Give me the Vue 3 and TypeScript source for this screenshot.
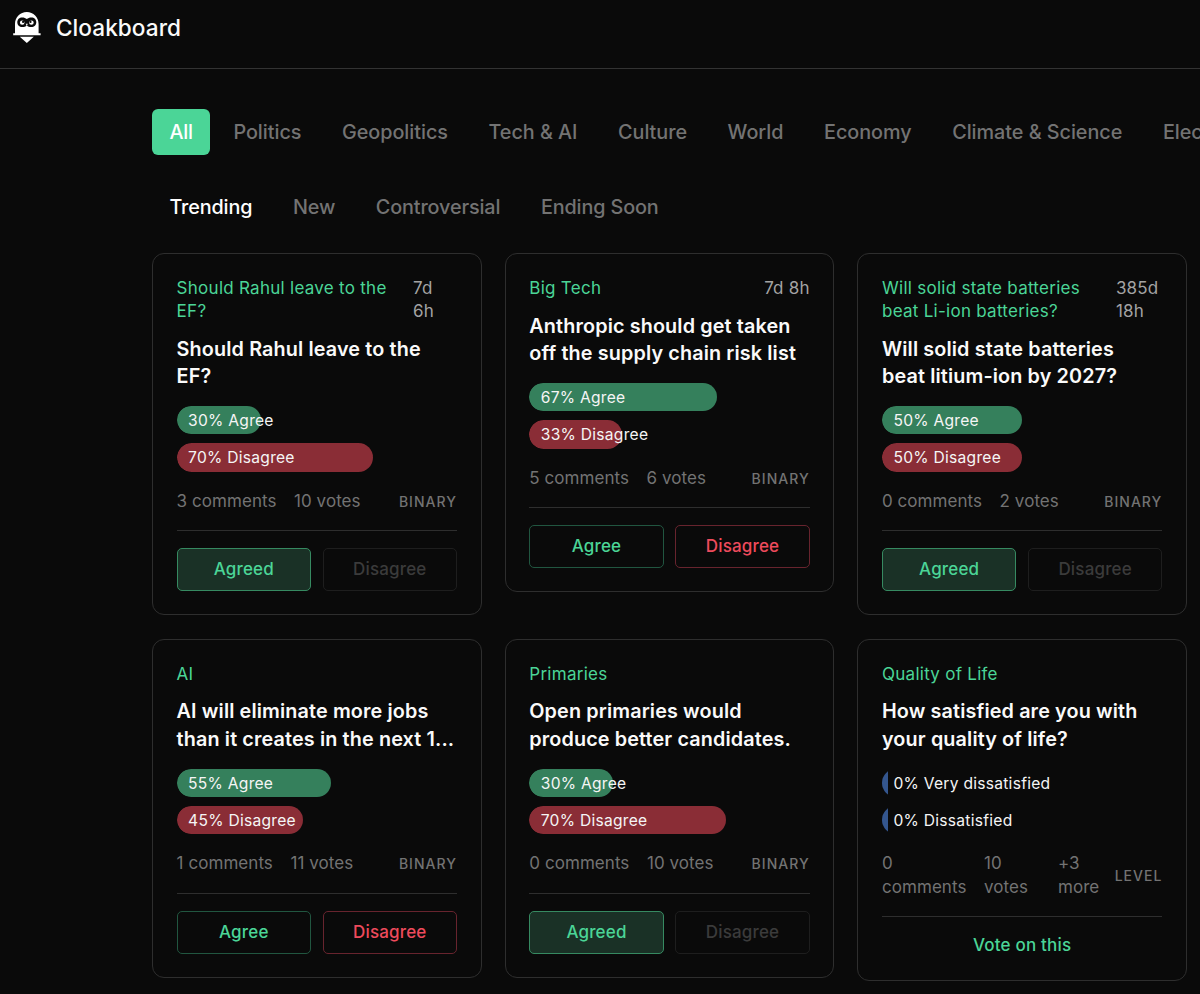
<script setup lang="ts">
interface Bar {
  pct: number
  label: string
  tone: 'agree' | 'disagree' | 'level'
}
interface Card {
  topic: string
  time?: string
  timeWidth?: number
  title: string
  bars: Bar[]
  comments: string
  votes: string
  more?: string
  kind: 'BINARY' | 'LEVEL'
  state: 'open' | 'agreed' | 'link'
}

const categories = ['All', 'Politics', 'Geopolitics', 'Tech & AI', 'Culture', 'World', 'Economy', 'Climate & Science', 'Elections']
const sorts = ['Trending', 'New', 'Controversial', 'Ending Soon']

const split = (agree: number): Bar[] => [
  { pct: agree, label: 'Agree', tone: 'agree' },
  { pct: 100 - agree, label: 'Disagree', tone: 'disagree' },
]

const cards: Card[] = [
  { topic: 'Should Rahul leave to the\nEF?', time: '7d\n6h', timeWidth: 44, title: 'Should Rahul leave to the\nEF?', bars: split(30), comments: '3 comments', votes: '10 votes', kind: 'BINARY', state: 'agreed' },
  { topic: 'Big Tech', time: '7d 8h', title: 'Anthropic should get taken\noff the supply chain risk list', bars: split(67), comments: '5 comments', votes: '6 votes', kind: 'BINARY', state: 'open' },
  { topic: 'Will solid state batteries\nbeat Li-ion batteries?', time: '385d\n18h', timeWidth: 46.5, title: 'Will solid state batteries\nbeat litium-ion by 2027?', bars: split(50), comments: '0 comments', votes: '2 votes', kind: 'BINARY', state: 'agreed' },
  { topic: 'AI', title: 'AI will eliminate more jobs\nthan it creates in the next 1...', bars: split(55), comments: '1 comments', votes: '11 votes', kind: 'BINARY', state: 'open' },
  { topic: 'Primaries', title: 'Open primaries would\nproduce better candidates.', bars: split(30), comments: '0 comments', votes: '10 votes', kind: 'BINARY', state: 'agreed' },
  {
    topic: 'Quality of Life',
    title: 'How satisfied are you with\nyour quality of life?',
    bars: [
      { pct: 0, label: 'Very dissatisfied', tone: 'level' },
      { pct: 0, label: 'Dissatisfied', tone: 'level' },
    ],
    comments: '0\ncomments',
    votes: '10\nvotes',
    more: '+3\nmore',
    kind: 'LEVEL',
    state: 'link',
  },
]
</script>

<template>
  <div class="page">
    <header class="header">
      <svg class="logo" viewBox="0 0 28 32" aria-hidden="true">
        <path d="M2 21.2V12C2 5 7.2 0 13.8 0S25.6 5 25.6 12V21.2H27.6V23.2H0.2V21.2Z" fill="#fff" />
        <path d="M6.8 24.8H20.8L13.8 31Z" fill="#fff" />
        <path d="M9.2 5.4C11.2 5.4 12.6 6 13.8 7C15 6 16.4 5.4 18.4 5.4C21.2 5.4 23.3 7.4 23.3 10.3S21.2 15.1 18.4 15.1C16.4 15.1 15 14.4 13.8 13.4C12.6 14.4 11.2 15.1 9.2 15.1C6.4 15.1 4.3 13.2 4.3 10.3S6.4 5.4 9.2 5.4Z" fill="#0a0a0a" />
        <ellipse cx="9.2" cy="10.7" rx="2.3" ry="2.1" fill="#fff" />
        <ellipse cx="18.4" cy="10.7" rx="2.3" ry="2.1" fill="#fff" />
        <circle cx="10.1" cy="9.9" r="1.1" fill="#0a0a0a" />
        <circle cx="17.5" cy="9.9" r="1.1" fill="#0a0a0a" />
        <path d="M12.8 11.8H14.8L13.8 14.2Z" fill="#fff" />
      </svg>
      <span class="brand">Cloakboard</span>
    </header>

    <main class="main">
      <nav class="tabs">
        <button v-for="(c, i) in categories" :key="c" class="tab" :class="{ 'tab--active': i === 0 }">{{ c }}</button>
      </nav>
      <nav class="tabs tabs--sort">
        <button v-for="(s, i) in sorts" :key="s" class="tab" :class="{ 'tab--current': i === 0 }">{{ s }}</button>
      </nav>

      <section class="grid">
        <article v-for="card in cards" :key="card.title" class="card">
          <div class="card-head">
            <span class="topic">{{ card.topic }}</span>
            <span v-if="card.time" class="time" :style="card.timeWidth ? { width: card.timeWidth + 'px' } : undefined">{{ card.time }}</span>
          </div>
          <h3 class="title">{{ card.title }}</h3>
          <div class="bars">
            <div v-for="bar in card.bars" :key="bar.label" class="bar">
              <div class="fill" :class="'fill--' + bar.tone" :style="{ width: Math.max(bar.pct, 2.1) + '%' }"></div>
              <span class="bar-label">{{ bar.pct }}% {{ bar.label }}</span>
            </div>
          </div>
          <div class="meta">
            <span class="comments">{{ card.comments }}</span>
            <span class="votes">{{ card.votes }}</span>
            <span v-if="card.more" class="more">{{ card.more }}</span>
            <span class="kind">{{ card.kind }}</span>
          </div>
          <div class="actions">
            <a v-if="card.state === 'link'" class="vote-link">Vote on this</a>
            <template v-else-if="card.state === 'agreed'">
              <button class="btn btn--agreed">Agreed</button>
              <button class="btn btn--disabled" disabled>Disagree</button>
            </template>
            <template v-else>
              <button class="btn btn--agree">Agree</button>
              <button class="btn btn--disagree">Disagree</button>
            </template>
          </div>
        </article>
      </section>
    </main>
  </div>
</template>

<style>
html,
body {
  margin: 0;
  background: #0a0a0a;
  overflow: hidden;
}
</style>

<style scoped>
.page {
  width: 1200px;
  height: 994px;
  overflow: hidden;
  background: #0a0a0a;
  color: #f5f5f5;
  font-family: Inter, 'Liberation Sans', sans-serif;
}
.page * {
  box-sizing: border-box;
}
.header {
  display: flex;
  align-items: center;
  height: 69px;
  padding: 0 0 13px 13px;
  border-bottom: 1px solid #333;
}
.logo {
  width: 28px;
  height: 32px;
}
.brand {
  margin-left: 15px;
  font-size: 22.6px;
  font-weight: 500;
  letter-spacing: 0.05px;
  color: #fafafa;
}
.main {
  padding: 40px 0 0 152px;
}
.tabs {
  display: flex;
  gap: 5.8px;
}
.tabs--sort {
  margin: 29px 0 23px;
}
.tab {
  flex: none;
  height: 46px;
  padding: 0 17.4px;
  border: 0;
  border-radius: 6px;
  background: transparent;
  color: #737373;
  font: 500 19.8px / 29px Inter, sans-serif;
  letter-spacing: -0.03px;
  white-space: nowrap;
}
.tabs--sort .tab {
  letter-spacing: -0.12px;
}
.tab--active {
  background: #4bd597;
  color: #fff;
  letter-spacing: -0.2px;
}
.tab--current {
  color: #fff;
}
.grid {
  display: grid;
  grid-template-columns: repeat(3, 329.6px);
  gap: 24px 23.1px;
  align-items: start;
}
.card {
  padding: 23.3px 23.6px 23px;
  border: 1px solid #2e2e2e;
  border-radius: 12px;
}
.card-head {
  display: flex;
  justify-content: space-between;
  margin-bottom: 12.2px;
  font-size: 17px;
  line-height: 23.1px;
  white-space: pre-line;
}
.topic {
  color: #4bd597;
  font-weight: 400;
  letter-spacing: 0.27px;
}
.time {
  color: #a3a3a3;
  letter-spacing: 0.2px;
}
.title {
  margin: 0 0 15.6px;
  font-size: 19.8px;
  font-weight: 600;
  line-height: 27.3px;
  letter-spacing: 0.13px;
  white-space: pre;
  color: #fafafa;
}
.bars {
  display: grid;
  gap: 8.8px;
}
.bar {
  position: relative;
  height: 28.5px;
  border-radius: 15px;
  overflow: hidden;
}
.fill {
  height: 100%;
  border-radius: 15px;
}
.fill--agree {
  background: #35805c;
}
.fill--disagree {
  background: #8a2d36;
}
.fill--level {
  border-radius: 0;
  background: #34568e;
}
.bar-label {
  position: absolute;
  inset: 0 auto 0 11.5px;
  font-size: 15.6px;
  font-weight: 400;
  line-height: 29px;
  letter-spacing: 0.26px;
  color: #f5f5f5;
  white-space: nowrap;
}
.meta {
  display: flex;
  align-items: center;
  margin: 18px 0 17px;
  font-size: 17px;
  line-height: 23.2px;
  letter-spacing: 0.06px;
  color: #737373;
  white-space: pre;
}
.votes {
  margin-left: 17.5px;
}
.more {
  margin-left: 30px;
}
.kind {
  margin-left: auto;
  font-size: 14px;
  font-weight: 500;
  letter-spacing: 1.02px;
}
.actions {
  display: flex;
  gap: 11.6px;
  padding-top: 17px;
  border-top: 1px solid #2e2e2e;
}
.btn {
  flex: 1;
  height: 43px;
  padding: 0;
  border: 1px solid;
  border-radius: 5px;
  background: transparent;
  font: 500 17px / 23px Inter, sans-serif;
  letter-spacing: 0.17px;
}
.btn--agree {
  color: #4bd597;
  border-color: #215640;
}
.btn--disagree {
  color: #ee4a5c;
  border-color: #68242e;
}
.btn--agreed {
  color: #4bd597;
  border-color: #368a61;
  background: #1a3126;
}
.btn--disabled {
  color: #3b3b3b;
  border-color: #1e1e1e;
}
.vote-link {
  flex: 1;
  line-height: 23.3px;
  text-align: center;
  color: #4bd597;
  font-size: 17px;
  font-weight: 500;
  letter-spacing: 0.2px;
}
</style>
